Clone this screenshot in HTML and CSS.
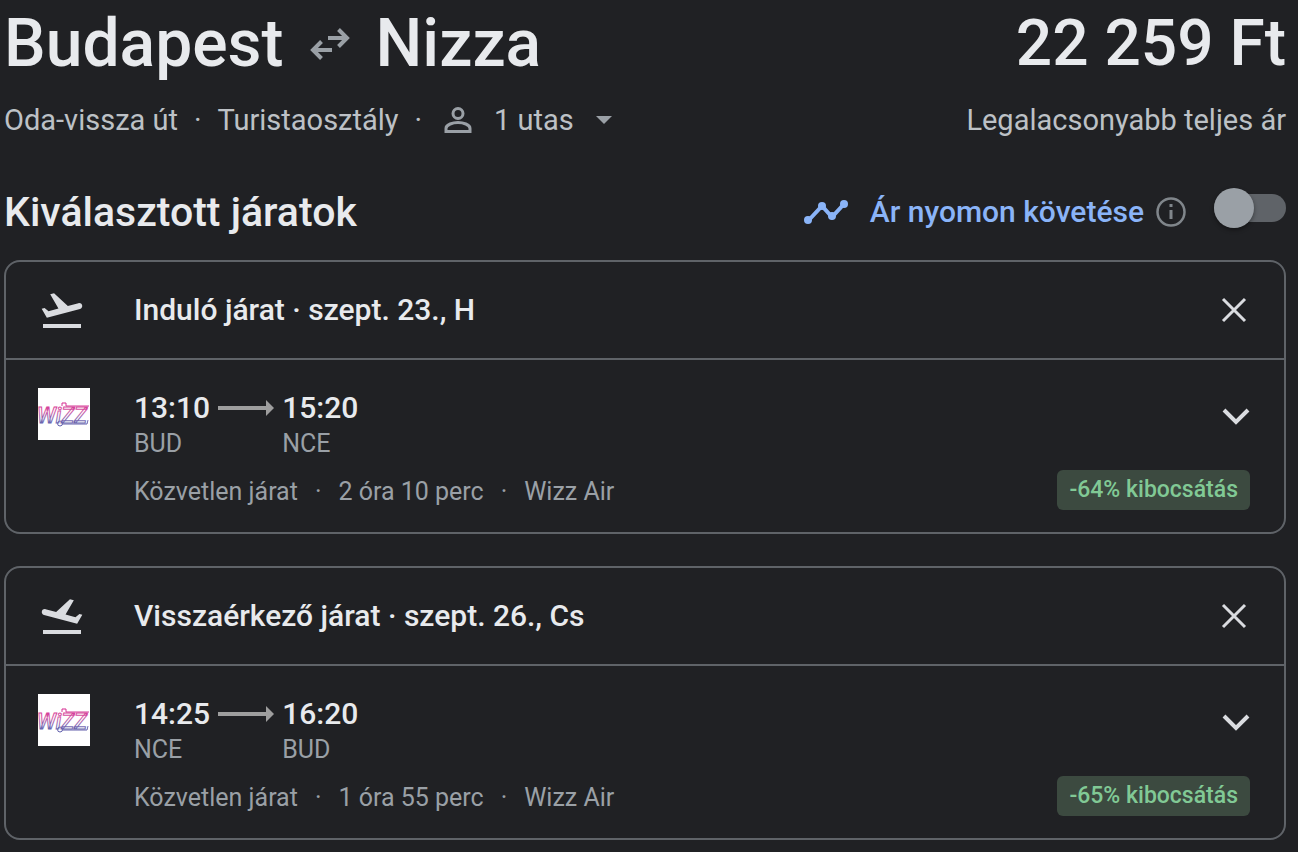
FILE: index.html
```html
<!DOCTYPE html>
<html lang="hu">
<head>
    <meta charset="UTF-8">
    <meta name="viewport" content="width=device-width, initial-scale=1.0">
    <title>Budapest – Nizza</title>
    <link rel="stylesheet" href="styles.css">
</head>
<body>
    <!-- shared logo -->
    <svg class="defs" width="0" height="0" aria-hidden="true">
        <defs>
            <linearGradient id="wizzGradient" gradientUnits="userSpaceOnUse" x1="0" y1="14" x2="0" y2="38">
                <stop offset="0" stop-color="#d6248c"/>
                <stop offset="0.4" stop-color="#d45aa6"/>
                <stop offset="0.75" stop-color="#7d6cb4"/>
                <stop offset="1" stop-color="#5a5aa8"/>
            </linearGradient>
            <symbol id="wizz" viewBox="0 0 52 52">
                <rect width="52" height="52" fill="#fff"/>
                <g fill="none" stroke="url(#wizzGradient)" stroke-width="1">
                    <text x="-1" y="35" class="logo-text">WiZZ</text>
                    <path d="M24 18v-3h4v3h23M24 36h25l1-4"/>
                    <circle cx="22" cy="35.500" r="2.500"/>
                </g>
            </symbol>
        </defs>
    </svg>

    <main class="page">
        <div class="trip-title">
            <h1>
                <span>Budapest</span>
                <svg class="swap-icon" width="40" height="32" viewBox="0 0 40 32" fill="none" stroke="#9aa0a6" stroke-width="4">
                    <path d="M18 10h19M28.500 1.500 37 10l-8.500 8.500M22 22H3M11.500 13.500 3 22l8.500 8.500"/>
                </svg>
                <span>Nizza</span>
            </h1>
            <div class="price">22 259 Ft</div>
        </div>

        <div class="trip-info">
            <div class="trip-options">
                <span>Oda-vissza út</span>
                <span class="dot">·</span>
                <span>Turistaosztály</span>
                <span class="dot">·</span>
                <button class="passengers" type="button">
                    <svg width="28" height="28" viewBox="0 0 28 28" fill="none" stroke="#9aa0a6" stroke-width="3">
                        <circle cx="14" cy="7.500" r="5"/>
                        <path d="M2 25.500v-3c0-4 7-6 12-6s12 2 12 6v3z"/>
                    </svg>
                    <span>1 utas</span>
                    <svg width="16" height="8" viewBox="0 0 16 8" fill="#9aa0a6"><path d="M0 0h16L8 8z"/></svg>
                </button>
            </div>
            <div>Legalacsonyabb teljes ár</div>
        </div>

        <div class="section-head">
            <h2>Kiválasztott járatok</h2>
            <div class="tracking">
                <svg width="44" height="28" viewBox="0 0 44 28" fill="#8ab4f8">
                    <path d="M4 23 18 8l10 11L40 6" fill="none" stroke="#8ab4f8" stroke-width="4"/>
                    <circle cx="4" cy="22" r="4"/>
                    <circle cx="18" cy="8" r="4"/>
                    <circle cx="28" cy="18" r="4"/>
                    <circle cx="40" cy="6" r="4"/>
                </svg>
                <label for="track">Ár nyomon követése</label>
                <button class="icon-button" type="button" aria-label="Információ">
                    <svg width="30" height="30" viewBox="0 0 30 30" fill="#80868b">
                        <circle cx="15" cy="15" r="13.500" fill="none" stroke="#80868b" stroke-width="2.500"/>
                        <path d="M13.500 7h3v3h-3zM13.500 13h3v9h-3z"/>
                    </svg>
                </button>
                <input id="track" class="toggle" type="checkbox">
            </div>
        </div>

        <section class="flight">
            <header class="flight-head">
                <svg width="48" height="48" viewBox="0 0 24 24" fill="#dadce0">
                    <path d="M2.500 19h19v2h-19zM22.070 9.640c-.21-.8-1.040-1.280-1.840-1.060L14.920 10l-6.900-6.430-1.930.51 4.140 7.170-4.970 1.330-1.970-1.540-1.450.39 2.590 4.490L21 11.490c.81-.23 1.280-1.050 1.070-1.850z"/>
                </svg>
                <h3>Induló járat · szept. 23., H</h3>
                <button class="icon-button" type="button" aria-label="Törlés">
                    <svg width="28" height="28" viewBox="0 0 28 28" fill="none" stroke="#dadce0" stroke-width="3"><path d="m3 3 22 22M25 3 3 25"/></svg>
                </button>
            </header>
            <div class="flight-body">
                <svg class="logo" width="52" height="52" role="img" aria-label="Wizz Air"><use href="#wizz"/></svg>
                <div class="route">
                    <span class="time">13:10</span>
                    <svg width="56" height="16" viewBox="0 0 56 16" fill="#9e9e9e"><path d="M0 6h48V0l8 8-8 8v-6H0z"/></svg>
                    <span class="time">15:20</span>
                    <span class="code">BUD</span>
                    <span class="code arrival">NCE</span>
                </div>
                <button class="icon-button expand" type="button" aria-label="Részletek">
                    <svg width="28" height="18" viewBox="0 0 28 18" fill="none" stroke="#dadce0" stroke-width="4"><path d="m2 3 12 12L26 3"/></svg>
                </button>
                <div class="details">
                    <span>Közvetlen járat</span>
                    <span class="dot">·</span>
                    <span>2 óra 10 perc</span>
                    <span class="dot">·</span>
                    <span>Wizz Air</span>
                </div>
                <div class="badge">-64% kibocsátás</div>
            </div>
        </section>

        <section class="flight">
            <header class="flight-head">
                <svg width="48" height="48" viewBox="0 0 24 24" fill="#dadce0">
                    <path d="M2.500 19h19v2h-19z"/>
                    <path transform="matrix(-1 0 0 1 24 0)" d="M22.070 9.640c-.21-.8-1.040-1.280-1.840-1.060L14.920 10l-6.900-6.430-1.930.51 4.140 7.170-4.970 1.330-1.970-1.540-1.450.39 2.590 4.490L21 11.490c.81-.23 1.280-1.050 1.070-1.850z"/>
                </svg>
                <h3>Visszaérkező járat · szept. 26., Cs</h3>
                <button class="icon-button" type="button" aria-label="Törlés">
                    <svg width="28" height="28" viewBox="0 0 28 28" fill="none" stroke="#dadce0" stroke-width="3"><path d="m3 3 22 22M25 3 3 25"/></svg>
                </button>
            </header>
            <div class="flight-body">
                <svg class="logo" width="52" height="52" role="img" aria-label="Wizz Air"><use href="#wizz"/></svg>
                <div class="route">
                    <span class="time">14:25</span>
                    <svg width="56" height="16" viewBox="0 0 56 16" fill="#9e9e9e"><path d="M0 6h48V0l8 8-8 8v-6H0z"/></svg>
                    <span class="time">16:20</span>
                    <span class="code">NCE</span>
                    <span class="code arrival">BUD</span>
                </div>
                <button class="icon-button expand" type="button" aria-label="Részletek">
                    <svg width="28" height="18" viewBox="0 0 28 18" fill="none" stroke="#dadce0" stroke-width="4"><path d="m2 3 12 12L26 3"/></svg>
                </button>
                <div class="details">
                    <span>Közvetlen járat</span>
                    <span class="dot">·</span>
                    <span>1 óra 55 perc</span>
                    <span class="dot">·</span>
                    <span>Wizz Air</span>
                </div>
                <div class="badge">-65% kibocsátás</div>
            </div>
        </section>
    </main>
</body>
</html>
```
FILE: styles.css
```css
* {
    box-sizing: border-box;
}
body {
    margin: 0;
    background-color: #202124;
    color: #e8eaed;
    font-family: Roboto, 'Liberation Sans', Arial, sans-serif;
}
h1, h2, h3 {
    margin: 0;
    font-weight: 500;
}
button {
    padding: 0;
    border: none;
    background: none;
    color: inherit;
    font: inherit;
    cursor: pointer;
}
svg {
    display: block;
    flex: none;
}
.defs {
    position: absolute;
}
.page {
    padding: 0 12px 12px 4px;
}
.trip-title,
.trip-info,
.section-head {
    display: flex;
    align-items: center;
    justify-content: space-between;
}
.trip-title {
    font-weight: 500;
    line-height: 88px;
}
.price {
    font-size: 64px;
}
h1 {
    display: flex;
    align-items: center;
    gap: 26px;
    font-size: 66px;
}
.trip-info {
    margin-top: 12px;
    font-size: 29px;
    line-height: 40px;
    color: #bdc1c6;
}
.trip-options {
    display: flex;
    align-items: center;
    gap: 16px;
}
.passengers {
    display: flex;
    align-items: center;
    gap: 22px;
    margin-left: 6px;
}
.section-head {
    margin-top: 48px;
    line-height: 48px;
}
h2 {
    font-size: 41px;
}
.tracking {
    display: flex;
    align-items: center;
    font-size: 30px;
    font-weight: 500;
    color: #8ab4f8;
}
.tracking label {
    margin: 0 12px 0 22px;
}
/* switch */
.toggle {
    appearance: none;
    display: flex;
    align-items: center;
    width: 72px;
    height: 28px;
    margin: 0 0 8px 28px;
    border-radius: 14px;
    background-color: #5f6368;
    cursor: pointer;
}
.toggle::before {
    content: '';
    width: 40px;
    height: 40px;
    flex: none;
    border-radius: 50%;
    background-color: #9aa0a6;
    box-shadow: 0 2px 4px rgba(0,0,0,0.4);
}
.toggle:checked {
    justify-content: flex-end;
    background-color: #8ab4f8;
}
/* flight cards */
.flight {
    margin-top: 24px;
    border: 2px solid #5f6368;
    border-radius: 16px;
}
.flight + .flight {
    margin-top: 32px;
}
.flight-head {
    display: flex;
    align-items: center;
    gap: 48px;
    height: 98px;
    padding: 0 36px 0 32px;
    border-bottom: 2px solid #5f6368;
}
h3 {
    flex: 1;
    font-size: 30px;
    line-height: 40px;
}
.flight-body {
    display: grid;
    grid-template-columns: 52px 1fr auto;
    column-gap: 44px;
    padding: 28px 34px 18px 32px;
}
.route {
    display: grid;
    grid-template-columns: auto auto auto;
    grid-template-rows: 40px 32px;
    column-gap: 8px;
    align-items: center;
    justify-content: start;
}
.time {
    font-size: 30px;
    font-weight: 500;
    line-height: 40px;
}
.code {
    font-size: 25px;
    line-height: 32px;
    color: #9aa0a6;
}
.arrival {
    grid-column: 3;
}
.expand {
    align-self: start;
    justify-self: end;
    margin-top: 12px;
    height: 32px;
}
.details {
    grid-column: 2;
    display: flex;
    gap: 17px;
    margin-top: 10px;
    font-size: 25px;
    line-height: 44px;
    color: #9aa0a6;
}
.badge {
    align-self: start;
    margin-top: 10px;
    padding: 0 12px;
    border-radius: 6px;
    background-color: #3c4a40;
    color: #81c995;
    font-size: 23px;
    font-weight: 500;
    line-height: 40px;
}
.logo-text {
    font-family: Roboto, 'Liberation Sans', Arial, sans-serif;
    font-size: 22px;
    font-style: italic;
    font-weight: 500;
}
```
